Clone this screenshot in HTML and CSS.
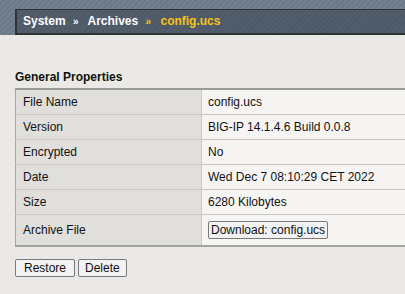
FILE: index.html
```html
<!DOCTYPE html>
<html lang="en">
<head>
  <meta charset="UTF-8" />
  <title>Archives - config.ucs</title>
<link rel="stylesheet" href="styles.css">
</head>
<body>
  <div class="banner">
    <div class="crumbs">
      <span>System</span>
      <span class="sep">&raquo;</span>
      <span>Archives</span>
      <span class="sep current">&raquo;</span>
      <span class="current">config.ucs</span>
    </div>
  </div>

  <div class="content">
    <h2>General Properties</h2>
    <table class="props">
      <tr><th>File Name</th><td>config.ucs</td></tr>
      <tr><th>Version</th><td>BIG-IP 14.1.4.6 Build 0.0.8</td></tr>
      <tr><th>Encrypted</th><td>No</td></tr>
      <tr><th>Date</th><td>Wed Dec 7 08:10:29 CET 2022</td></tr>
      <tr><th>Size</th><td>6280 Kilobytes</td></tr>
      <tr class="tall"><th>Archive File</th><td><button class="download">Download: config.ucs</button></td></tr>
    </table>
    <div class="actions">
      <button class="restore">Restore</button>
      <button>Delete</button>
    </div>
  </div>
</body>
</html>
```

FILE: styles.css
```css
body {
  margin: 0;
  background: #eae9e5;
  font-family: "Liberation Sans", Arial, sans-serif;
  font-size: 12px;
  color: #111;
}

.banner {
  height: 35px;
  box-sizing: border-box;
  padding: 9px 0 0 15px;
  background: repeating-linear-gradient(135deg, #73818f 0 2px, #6a7887 2px 4px);
}

.crumbs {
  height: 26px;
  box-sizing: border-box;
  border: 2px solid #2e3338;
  border-right: none;
  border-top-width: 1px;
  background: repeating-linear-gradient(135deg, #525e6b 0 2px, #4d5966 2px 4px);
  padding-left: 6px;
  color: #fff;
  font-weight: bold;
  line-height: 22px;
}

.sep {
  font-size: 10px;
  margin: 0 6px 0 4px;
}

.current {
  color: #f7c31a;
}

.content {
  padding-left: 15px;
}

h2 {
  font-size: 12px;
  margin: 35px 0 4px;
  color: #111;
}

.props {
  width: 100%;
  border-collapse: collapse;
  border-top: 2px solid #9a9a98;
  border-bottom: 2px solid #a3a3a1;
  border-left: 1px solid #a7a7a5;
}

.props th,
.props td {
  height: 24px;
  padding: 0 6px;
  text-align: left;
  font-weight: normal;
  border-bottom: 1px solid #c9c8c5;
  white-space: nowrap;
}

.props th {
  width: 172px;
  padding-left: 7px;
  background: #e0dfdb;
  border-right: 1px solid #c9c8c5;
}

.props td {
  background: #f6f5f3;
}

.props tr.tall th,
.props tr.tall td {
  height: 30px;
  border-bottom: none;
}

button {
  font-family: "Liberation Sans", Arial, sans-serif;
  font-size: 12px;
  color: #111;
  height: 18px;
  padding: 0 6px;
  background: #f2f2f2;
  border: 1px solid #7a7a7a;
  border-radius: 2px;
}

.actions .restore {
  padding: 0 8px;
}

.props .download {
  padding: 0 2px;
}

.actions {
  margin-top: 12px;
  display: flex;
  gap: 3px;
}
```
